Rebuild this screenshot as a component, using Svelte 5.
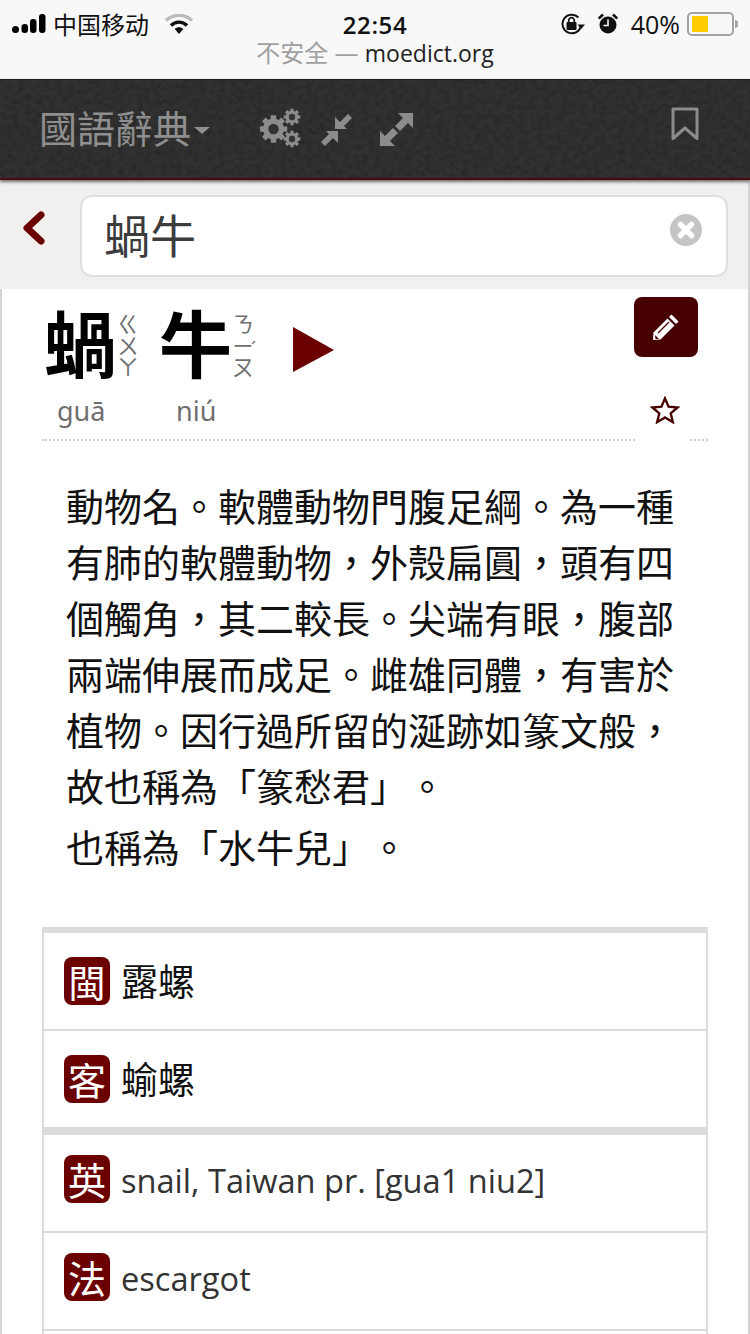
<script>
  // Builds a toothed gear outline centred on (cx, cy).
  function gear(cx, cy, outer, inner, teeth) {
    const step = (Math.PI * 2) / teeth;
    const pts = [];
    for (let i = 0; i < teeth; i++) {
      const a = i * step;
      const w = step * 0.24;
      const g = step * 0.34;
      pts.push([a - g, inner], [a - w, outer], [a + w, outer], [a + g, inner]);
    }
    return (
      pts
        .map(([a, r], i) => `${i ? 'L' : 'M'}${(cx + r * Math.cos(a)).toFixed(2)} ${(cy + r * Math.sin(a)).toFixed(2)}`)
        .join(' ') + 'Z'
    );
  }

  const definition = [
    '動物名。軟體動物門腹足綱。為一種有肺的軟體動物，外殼扁圓，頭有四個觸角，其二較長。尖端有眼，腹部兩端伸展而成足。雌雄同體，有害於植物。因行過所留的涎跡如篆文般，故也稱為「篆愁君」。',
    '也稱為「水牛兒」。'
  ];

  const groups = [
    [
      { tag: '閩', text: '露螺', cjk: true },
      { tag: '客', text: '蝓螺', cjk: true }
    ],
    [
      { tag: '英', text: 'snail, Taiwan pr. [gua1 niu2]' },
      { tag: '法', text: 'escargot' },
      { tag: '德', text: 'Schnecke' }
    ]
  ];
</script>

<svelte:head>
  <title>蝸牛 - 萌典</title>
</svelte:head>

<div class="page">
  <header class="chrome">
    <div class="status">
      <div class="left">
        <svg class="signal" width="34" height="22" viewBox="0 0 34 22">
          <circle cx="3.500" cy="16.500" r="3.500" />
          <rect x="9.500" y="11" width="6.500" height="9" rx="3" />
          <rect x="18" y="6" width="6.500" height="14" rx="3" />
          <rect x="27" y="1" width="6.500" height="19" rx="3" />
        </svg>
        <span class="carrier">中国移动</span>
        <svg class="wifi" width="28" height="20" viewBox="0 0 28 20">
          <path d="M1 6.500C8.500 -.5 19.500 -.5 27 6.500" fill="none" stroke="#bdbdbd" stroke-width="3.400" />
          <path d="M6 11.500C10.500 7 17.500 7 22 11.500" fill="none" stroke="#111" stroke-width="3.400" />
          <path d="M9.700 15C12.200 12.700 15.800 12.700 18.300 15L14 20Z" fill="#111" />
        </svg>
      </div>
      <span class="clock">22:54</span>
      <div class="right">
        <svg width="24" height="22" viewBox="0 0 24 22">
          <path d="M20 12.500A9.300 9.300 0 1 1 17.500 4.500" fill="none" stroke="#111" stroke-width="2" />
          <path d="M16.500 11.500H24L20.200 16Z" fill="#111" />
          <rect x="5.500" y="9" width="10" height="8" rx="1" fill="#111" />
          <path d="M7.700 9V7.500a2.800 2.800 0 0 1 5.600 0V9" fill="none" stroke="#111" stroke-width="1.700" />
        </svg>
        <svg class="alarm" width="20" height="22" viewBox="0 0 20 22">
          <circle cx="10" cy="12" r="8.500" fill="#111" />
          <path d="M10 6.500V12.500H5.500" fill="none" stroke="#f8f8f8" stroke-width="1.600" />
          <path d="M.7 5.500 5 1.500M19.300 5.500 15 1.500" stroke="#111" stroke-width="2.600" />
        </svg>
        <span class="percent">40%</span>
        <div class="battery"><div class="charge"></div></div>
        <div class="nub"></div>
      </div>
    </div>
    <div class="url"><span class="warn">不安全 —&nbsp;</span><span class="host">moedict.org</span></div>
  </header>

  <nav class="topbar">
    <svg class="leather" aria-hidden="true">
      <filter id="grain">
        <feTurbulence type="fractalNoise" baseFrequency="0.16 0.2" numOctaves="3" seed="4" />
        <feColorMatrix values="0 0 0 0 0  0 0 0 0 0  0 0 0 0 0  1.100 0 0 0 -0.420" />
      </filter>
      <rect width="100%" height="100%" filter="url(#grain)" />
    </svg>
    <div class="brand">國語辭典<span class="caret"></span></div>
    <svg class="tool gears" width="42" height="40" viewBox="0 0 42 40">
      <path d={gear(13.500, 21, 14, 10.500, 8)} fill="#8c8c8c" />
      <circle cx="13.500" cy="21" r="5.200" fill="#333" />
      <path d={gear(32, 9, 8.500, 6.300, 8)} fill="#8c8c8c" />
      <circle cx="32" cy="9" r="3.200" fill="#333" />
      <path d={gear(32, 31, 8.500, 6.300, 8)} fill="#8c8c8c" />
      <circle cx="32" cy="31" r="3.200" fill="#333" />
    </svg>
    <svg class="tool compress" width="34" height="34" viewBox="0 0 34 34" fill="#8c8c8c">
      <path d="M15 16V4L20 9 28 1 32 5 24 13 27 16Z" />
      <path d="M18 18V30L13 25 5 33 1 29 9 21 6 18Z" />
    </svg>
    <svg class="tool expand" width="34" height="34" viewBox="0 0 34 34" fill="#8c8c8c">
      <path d="M18 0H33V15L28 10 20 18 15 13 23 5Z" />
      <path d="M15 33H0V18L5 23 13 15 18 20 10 28Z" />
    </svg>
    <svg class="mark" width="28" height="34" viewBox="0 0 28 34">
      <path d="M2 2H26V31.500L14 21 2 31.500Z" fill="none" stroke="#8c8c8c" stroke-width="3" stroke-linejoin="round" />
    </svg>
  </nav>

  <section class="search">
    <svg class="back" width="24" height="34" viewBox="0 0 24 34">
      <path d="M20 4 6 17 20 30" fill="none" stroke="#6b0000" stroke-width="7" stroke-linecap="round" stroke-linejoin="round" />
    </svg>
    <div class="field">
      <span>蝸牛</span>
      <svg width="32" height="32" viewBox="0 0 32 32">
        <circle cx="16" cy="16" r="16" fill="#c4c4c4" />
        <path d="M10.500 10.500 21.500 21.500M21.500 10.500 10.500 21.500" stroke="#fff" stroke-width="5.500" stroke-linecap="round" />
      </svg>
    </div>
  </section>

  <main class="content">
    <div class="head">
      <div class="word">
        <div class="syllable">
          <div class="glyph">
            <span class="han">蝸</span>
            <span class="zhuyin"><i>ㄍ</i><i>ㄨ</i><i>ㄚ</i></span>
          </div>
          <span class="pinyin">guā</span>
        </div>
        <div class="syllable second">
          <div class="glyph">
            <span class="han">牛</span>
            <span class="zhuyin"><i>ㄋ</i><i class="toned">ㄧ<b>ˊ</b></i><i>ㄡ</i></span>
          </div>
          <span class="pinyin">niú</span>
        </div>
        <svg class="play" width="42" height="45" viewBox="0 0 42 45">
          <path d="M0 0 41 23 0 45Z" fill="#6b0000" />
        </svg>
      </div>
      <div class="actions">
        <div class="edit">
          <svg width="28" height="28" viewBox="0 0 28 28">
            <path d="M19.500 1.500 26.500 8.500 24 11 17 4Z" fill="#fff" />
            <path d="M15.500 5.500 22.500 12.500 8.500 26.500 1 27 1.500 19.500Z" fill="#fff" />
            <path d="M6 20 17 9" stroke="#470000" stroke-width="1.200" />
            <path d="M3 22 7 26 3.500 26Z" fill="#470000" />
          </svg>
        </div>
        <svg class="star" width="30" height="28" viewBox="0 0 32 30">
          <path d="M16 2.500 19.800 11.500 29.500 12.300 22.100 18.600 24.400 28 16 23 7.600 28 9.900 18.600 2.500 12.300 12.200 11.500Z" fill="none" stroke="#470000" stroke-width="2.500" />
        </svg>
      </div>
    </div>
    <div class="rule"><span></span><span></span></div>

    <div class="definition">
      {#each definition as line}
        <p>{line}</p>
      {/each}
    </div>

    <div class="translations">
      {#each groups as group}
        <div class="group">
          {#each group as row}
            <div class="row">
              <span class="tag">{row.tag}</span>
              <span class="text" class:cjk={row.cjk}>{row.text}</span>
            </div>
          {/each}
        </div>
      {/each}
    </div>
  </main>
</div>

<style>
  :global(body) {
    margin: 0;
    background: #fff;
  }

  .page {
    width: 750px;
    height: 1334px;
    overflow: hidden;
    font-family: "Noto Sans CJK TC", "Noto Sans", sans-serif;
    text-spacing-trim: space-all;
  }

  .chrome {
    height: 79px;
    background: #f8f8f8;
    box-sizing: border-box;
    padding-top: 7px;
  }

  .status {
    height: 28px;
    display: grid;
    grid-template-columns: 1fr auto 1fr;
    align-items: center;
    padding: 0 12px;
    color: #111;
    font-size: 24px;
  }

  .left,
  .right {
    display: flex;
    align-items: center;
  }

  .right {
    justify-content: flex-end;
  }

  .carrier {
    margin: 0 0 0 7px;
    font-family: "Noto Sans CJK SC", sans-serif;
    line-height: 28px;
  }

  .wifi {
    margin-left: 16px;
  }

  .clock {
    font-family: "Open Sans", sans-serif;
    font-weight: 600;
    font-size: 24px;
    letter-spacing: 0.600px;
  }

  .alarm {
    margin-left: 13px;
  }

  .percent {
    margin-left: 13px;
    font-family: "Open Sans", sans-serif;
    font-size: 25px;
  }

  .battery {
    width: 37px;
    height: 16px;
    margin-left: 7px;
    border: 2px solid #a3a3a3;
    border-radius: 5px;
    padding: 2px 3px;
  }

  .charge {
    width: 16px;
    height: 16px;
    background: #ffcc00;
  }

  .nub {
    width: 3px;
    height: 8px;
    margin-left: 1px;
    background: #a3a3a3;
    border-radius: 0 3px 3px 0;
  }

  .url {
    height: 38px;
    line-height: 36px;
    text-align: center;
    font-family: "Open Sans", "Noto Sans CJK SC", sans-serif;
    font-size: 24px;
    color: #222;
  }

  .warn {
    color: #a0a0a0;
  }

  .host {
    font-size: 23px;
  }

  .topbar {
    position: relative;
    z-index: 2;
    height: 98px;
    background: #313131;
    border-top: 1px solid #1c1c1c;
    border-bottom: 2px solid #4a0a0a;
    box-shadow: 0 2px 3px rgba(0, 0, 0, 0.55);
    display: flex;
    align-items: flex-start;
    overflow: hidden;
  }

  .leather {
    position: absolute;
    inset: 0;
    width: 100%;
    height: 100%;
    opacity: 0.35;
  }

  .brand,
  .tool,
  .mark {
    position: relative;
  }

  .brand {
    margin: 20px 0 0 39px;
    width: 172px;
    display: flex;
    align-items: center;
    font-size: 38px;
    line-height: 54px;
    color: #8f8f8f;
    white-space: nowrap;
  }

  .caret {
    width: 0;
    height: 0;
    margin: 6px 0 0 3px;
    border-top: 7px solid #8f8f8f;
    border-left: 8.500px solid transparent;
    border-right: 8.500px solid transparent;
  }

  .gears {
    margin: 28px 0 0 49px;
  }

  .compress {
    margin: 33px 0 0 18px;
  }

  .expand {
    margin: 33px 0 0 26px;
  }

  .mark {
    margin: 27px 51px 0 auto;
  }

  .search {
    height: 109px;
    box-sizing: border-box;
    padding: 15px 21px 12px 21px;
    background: #f1f0ee;
    display: flex;
    align-items: flex-start;
    border-right: 2px solid #d4d4d4;
  }

  .back {
    margin: 16px 0 0 0;
    flex: none;
  }

  .field {
    margin-left: 35px;
    margin-right: -1px;
    flex: 1;
    height: 82px;
    box-sizing: border-box;
    border: 2px solid #dfdfdf;
    border-radius: 12px;
    background: #fff;
    display: flex;
    align-items: center;
    justify-content: space-between;
    padding: 0 24px 0 22px;
    font-size: 46px;
    color: #3c3c3c;
  }

  .field svg {
    margin-top: -12px;
  }

  .field span {
    line-height: 70px;
    margin-top: -6px;
  }

  .content {
    height: 1045px;
    box-sizing: border-box;
    border-left: 2px solid #d4d4d4;
    border-right: 2px solid #d4d4d4;
    padding: 0 40px;
    background: #fff;
  }

  .head {
    height: 150px;
    display: flex;
    justify-content: space-between;
  }

  .word {
    display: flex;
    align-items: flex-start;
  }

  .syllable {
    display: flex;
    flex-direction: column;
    width: 115px;
  }

  .syllable.second {
    width: 136px;
  }

  .glyph {
    display: flex;
    height: 106px;
    padding-top: 9px;
    box-sizing: border-box;
  }

  .han {
    font-size: 73px;
    line-height: 84px;
    font-weight: 700;
    color: #000;
    margin-left: 2px;
    width: 73px;
  }

  .zhuyin {
    display: flex;
    flex-direction: column;
    margin: 13px 0 0 0;
    color: #6f6f6f;
    font-size: 22px;
    line-height: 22px;
  }

  .zhuyin i {
    font-style: normal;
    position: relative;
    display: block;
    height: 21.500px;
    width: 15px;
    overflow: visible;
  }

  .zhuyin b {
    position: absolute;
    left: 19px;
    top: 4px;
    font-weight: 400;
    font-size: 18px;
    font-family: "Noto Sans", sans-serif;
  }

  .pinyin {
    margin-left: 15px;
    font-family: "Noto Sans", sans-serif;
    font-size: 27px;
    line-height: 36px;
    color: #6f6f6f;
    margin-top: -2px;
  }

  .second .pinyin {
    margin-left: 19px;
  }

  .play {
    margin-top: 38px;
  }

  .actions {
    width: 64px;
    margin-right: 10px;
    display: flex;
    flex-direction: column;
    align-items: center;
    padding-top: 8px;
  }

  .edit {
    width: 64px;
    height: 60px;
    background: #470000;
    border-radius: 8px;
    display: flex;
    align-items: center;
    justify-content: center;
  }

  .star {
    margin: 39px 2px 0 0;
  }

  .rule {
    display: flex;
    justify-content: space-between;
  }

  .rule span {
    width: 593px;
    border-top: 2px dotted #d0d0d0;
  }

  .rule span + span {
    width: 18px;
  }

  .definition {
    padding: 36px 25px 0 24px;
    color: #111;
    font-size: 38px;
    line-height: 56px;
  }

  .definition p {
    margin: 0 0 5px 0;
  }

  .translations {
    margin-top: 53px;
    border-left: 2px solid #dcdcdc;
    border-right: 2px solid #dcdcdc;
  }

  .group {
    border-top: 6px solid #dcdcdc;
  }

  .group + .group {
    border-top-width: 8px;
    margin-top: -2px;
  }

  .row {
    height: 96px;
    border-bottom: 2px solid #dcdcdc;
    display: flex;
    align-items: flex-start;
    padding-left: 20px;
  }

  .tag {
    flex: none;
    width: 46px;
    height: 48px;
    margin-top: 24px;
    border-radius: 8px;
    background: #6b0000;
    color: #fff;
    font-size: 38px;
    line-height: 48px;
    text-align: center;
  }

  .group + .group .tag {
    margin-top: 20px;
  }

  .text {
    margin: 21px 0 0 11px;
    font-family: "Open Sans", "Noto Sans", sans-serif;
    font-size: 32.600px;
    line-height: 50px;
    color: #333;
    white-space: nowrap;
  }

  .text.cjk {
    margin-top: 22px;
    font-family: "Noto Sans CJK TC", sans-serif;
    font-size: 37px;
    color: #111;
  }
</style>
